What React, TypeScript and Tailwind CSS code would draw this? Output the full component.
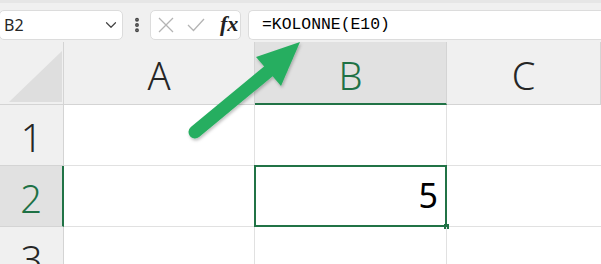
import { ChevronDown, EllipsisVertical } from 'lucide-react'

const cols = ['A', 'B', 'C']

export default function App() {
  return (
    <div className="w-[601px] h-[264px] overflow-hidden bg-[#f0f0f0] relative font-['Noto_Sans',sans-serif] text-[#262626]">
      {/* formula bar */}
      <div className="h-[42px] border-t-[3px] border-[#e6e6e6] flex items-start pt-[7px]">
        <div className="w-[124px] h-[30px] -ml-[1px] bg-white border border-[#dcdcdc] rounded-[5px] flex items-center justify-between pl-[4px] pr-[2px]">
          <span className="text-[16px] font-['Noto_Sans',sans-serif]">B2</span>
          <ChevronDown size={18} strokeWidth={1.6} className="text-[#444]" />
        </div>
        <div className="w-[27px] h-[30px] flex items-center justify-center">
          <EllipsisVertical size={18} strokeWidth={3.2} className="text-[#444]" />
        </div>
        <div className="w-[91px] h-[30px] bg-white border border-[#dcdcdc] rounded-[5px] flex items-center pl-[5px]">
          <svg width="18" height="18" viewBox="0 0 18 18" className="ml-[1px]">
            <path d="M2 2 L16 16 M16 2 L2 16" stroke="#b4b4b4" strokeWidth="1.3" fill="none" />
          </svg>
          <svg width="18" height="18" viewBox="0 0 18 18" className="ml-[12px]">
            <path d="M1 9 L6.5 14.5 L17 3" stroke="#b4b4b4" strokeWidth="1.3" fill="none" />
          </svg>
          <span className="ml-[15px] text-[22px] italic font-semibold font-['Liberation_Serif',serif] text-[#222] leading-none -mt-[3px]">fx</span>
        </div>
        <div className="ml-[7px] flex-1 h-[30px] bg-white border border-[#dcdcdc] border-r-0 rounded-l-[5px] flex items-center pl-[13px]">
          <span className="text-[16.4px] font-['Liberation_Mono',monospace] text-black">=KOLONNE(E10)</span>
        </div>
      </div>

      {/* grid */}
      <div className="grid grid-cols-[64px_191px_192px_1fr] bg-white">
        {/* header row */}
        <div className="h-[63px] bg-[#f0f0f0] border-r border-b border-[#d4d4d4] relative">
          <svg width="54" height="52" viewBox="0 0 54 52" className="absolute left-[9px] top-[9px]">
            <polygon points="53,0 53,51 0,51" fill="#dedede" />
          </svg>
        </div>
        {cols.map((c) => (
          <div
            key={c}
            className={
              c === 'B'
                ? 'h-[63px] bg-[#e1e1e1] border-r border-[#d4d4d4] border-b-2 border-b-[#217346] flex items-center justify-center text-[38px] text-[#1e7145] leading-none'
                : 'h-[63px] bg-[#f0f0f0] border-r border-b border-[#d4d4d4] flex items-center justify-center text-[38px] text-[#262626] leading-none'
            }
          >
            <span className="mt-[4px] font-light">{c}</span>
          </div>
        ))}

        {[1, 2, 3].map((r) => (
          <Row key={r} r={r} />
        ))}
      </div>

      {/* arrow */}
      <svg width="601" height="264" className="absolute left-0 top-0 pointer-events-none">
        <defs>
          <filter id="sh" x="-20%" y="-20%" width="140%" height="140%">
            <feDropShadow dx="1" dy="2" stdDeviation="1.5" floodColor="#000" floodOpacity="0.25" />
          </filter>
        </defs>
        <g filter="url(#sh)">
          <line x1="195" y1="132" x2="270" y2="70" stroke="#27ae60" strokeWidth="13" strokeLinecap="round" />
          <polygon points="300,42 256,57 281,86" fill="#27ae60" />
        </g>
      </svg>
    </div>
  )
}

function Row({ r }: { r: number }) {
  const sel = r === 2
  return (
    <>
      <div
        className={
          sel
            ? 'h-[61px] bg-[#e1e1e1] border-r-2 border-r-[#217346] border-b border-[#d4d4d4] flex items-center justify-center text-[38px] text-[#1e7145] leading-none'
            : 'h-[61px] bg-[#f0f0f0] border-r border-b border-[#d4d4d4] flex items-center justify-center text-[38px] text-[#262626] leading-none'
        }
      >
        <span className="mt-[4px] font-light">{r}</span>
      </div>
      <div className="h-[61px] border-r border-b border-[#e1e1e1]" />
      <div className="h-[61px] border-r border-b border-[#e1e1e1] relative flex items-center justify-end pr-[8px]">
        {sel && (
          <>
            <div className="absolute -left-[1px] -top-[1px] -right-[1px] -bottom-[1px] border-2 border-[#217346]" />
            <div className="absolute -right-[3px] -bottom-[3px] w-[5px] h-[5px] bg-[#217346]" />
            <span className="text-[34px] text-black leading-none -mt-[2px] font-['Noto_Sans',sans-serif]">5</span>
          </>
        )}
      </div>
      <div className="h-[61px] border-b border-[#e1e1e1]" />
    </>
  )
}
